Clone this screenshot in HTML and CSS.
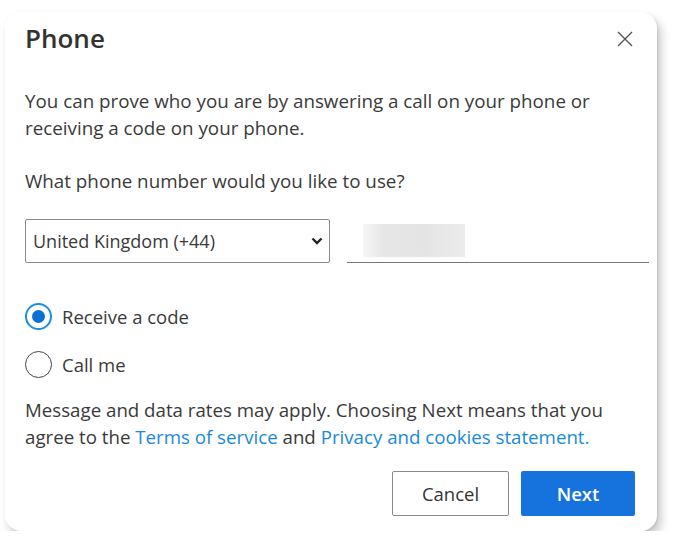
FILE: index.html
```html
<!DOCTYPE html>
<html lang="en">
<head>
    <meta charset="UTF-8">
    <meta name="viewport" content="width=device-width, initial-scale=1.0">
    <title>Phone</title>
    <link rel="stylesheet" href="styles.css">
</head>
<body>
    <div class="dialog">
        <div class="dialog-header">
            <h1>Phone</h1>
            <button class="close" aria-label="Close">
                <svg width="16" height="16" viewBox="0 0 16 16"><path d="M1 1L15 15M15 1L1 15" stroke="#555" stroke-width="1.4" fill="none"/></svg>
            </button>
        </div>

        <p class="intro">You can prove who you are by answering a call on your phone or receiving a code on your phone.</p>
        <p class="question">What phone number would you like to use?</p>

        <div class="phone-row">
            <div class="select-box">
                <span>United Kingdom (+44)</span>
                <svg width="12" height="8" viewBox="0 0 12 8"><path d="M1.5 1.5L6 6L10.5 1.5" stroke="#222" stroke-width="2.4" fill="none"/></svg>
            </div>
            <div class="number-input">
                <span class="blur"></span>
            </div>
        </div>

        <div class="options">
            <label class="option">
                <span class="radio checked"></span>
                Receive a code
            </label>
            <label class="option">
                <span class="radio"></span>
                Call me
            </label>
        </div>

        <p class="terms">Message and data rates may apply. Choosing Next means that you agree to the <a href="#">Terms of service</a> and <a href="#">Privacy and cookies statement.</a></p>

        <div class="actions">
            <button class="btn cancel">Cancel</button>
            <button class="btn next">Next</button>
        </div>
    </div>
</body>
</html>
```

FILE: styles.css
```css
body {
    margin: 0;
    background-color: #fff;
    font-family: "Open Sans", "Noto Sans", Arial, sans-serif;
    color: #3a3a3a;
}
.dialog {
    width: 652px;
    height: 519px;
    box-sizing: border-box;
    margin: 12px 0 0 5px;
    padding: 11px 20px 0 20px;
    background: #fff;
    border-radius: 16px;
    box-shadow: 1px 1px 2px rgba(0,0,0,0.08), 4px 6px 10px rgba(0,0,0,0.22);
}
.dialog-header {
    display: flex;
    justify-content: space-between;
    align-items: center;
    height: 30px;
}
h1 {
    margin: 0;
    font-size: 26px;
    line-height: 30px;
    font-weight: 600;
    color: #333;
}
.close {
    background: none;
    border: none;
    padding: 0;
    margin-right: 4px;
    margin-top: 2px;
    display: flex;
}
.intro {
    margin: 35px 0 0 0;
    font-size: 18.8px;
    line-height: 27px;
}
.question {
    margin: 26px 0 0 0;
    font-size: 18.8px;
    line-height: 27px;
}
.phone-row {
    display: flex;
    gap: 17px;
    margin-top: 24px;
}
.select-box {
    width: 305px;
    height: 44px;
    box-sizing: border-box;
    border: 1px solid #8a8a8a;
    border-radius: 2px;
    display: flex;
    align-items: center;
    justify-content: space-between;
    padding: 0 6px 0 7px;
    font-size: 18px;
}
.number-input {
    flex: 1;
    height: 44px;
    box-sizing: border-box;
    border-bottom: 1px solid #777;
    margin-right: -12px;
    padding: 5px 0 0 16px;
}
.blur {
    display: block;
    width: 102px;
    height: 33px;
    background: linear-gradient(90deg, #f6f6f6 0%, #e6e6e6 20%, #e4e4e4 60%, #ececec 100%);
}
.options {
    margin-top: 40px;
    display: flex;
    flex-direction: column;
    gap: 21px;
}
.option {
    display: flex;
    align-items: center;
    gap: 10px;
    font-size: 18.5px;
    height: 27px;
}
.radio {
    width: 27px;
    height: 27px;
    box-sizing: border-box;
    border: 1.5px solid #444;
    border-radius: 50%;
    position: relative;
}
.radio.checked {
    border: 2px solid #1b8ee8;
}
.radio.checked::after {
    content: "";
    position: absolute;
    left: 5px;
    top: 5px;
    width: 13px;
    height: 13px;
    border-radius: 50%;
    background: #0b6fd6;
}
.terms {
    margin: 18px 0 0 0;
    font-size: 18.7px;
    line-height: 27px;
}
.terms a {
    color: #1a8ad8;
    text-decoration: none;
}
.actions {
    display: flex;
    justify-content: flex-end;
    gap: 12px;
    margin-top: 21px;
    margin-right: 2px;
}
.btn {
    height: 45px;
    font-family: inherit;
    font-size: 18.5px;
    border-radius: 2px;
    cursor: pointer;
}
.cancel {
    width: 117px;
    background: #fff;
    border: 1px solid #8a8a8a;
    color: #333;
}
.next {
    width: 114px;
    background: #1673de;
    border: none;
    color: #fff;
    font-weight: 600;
}
```
